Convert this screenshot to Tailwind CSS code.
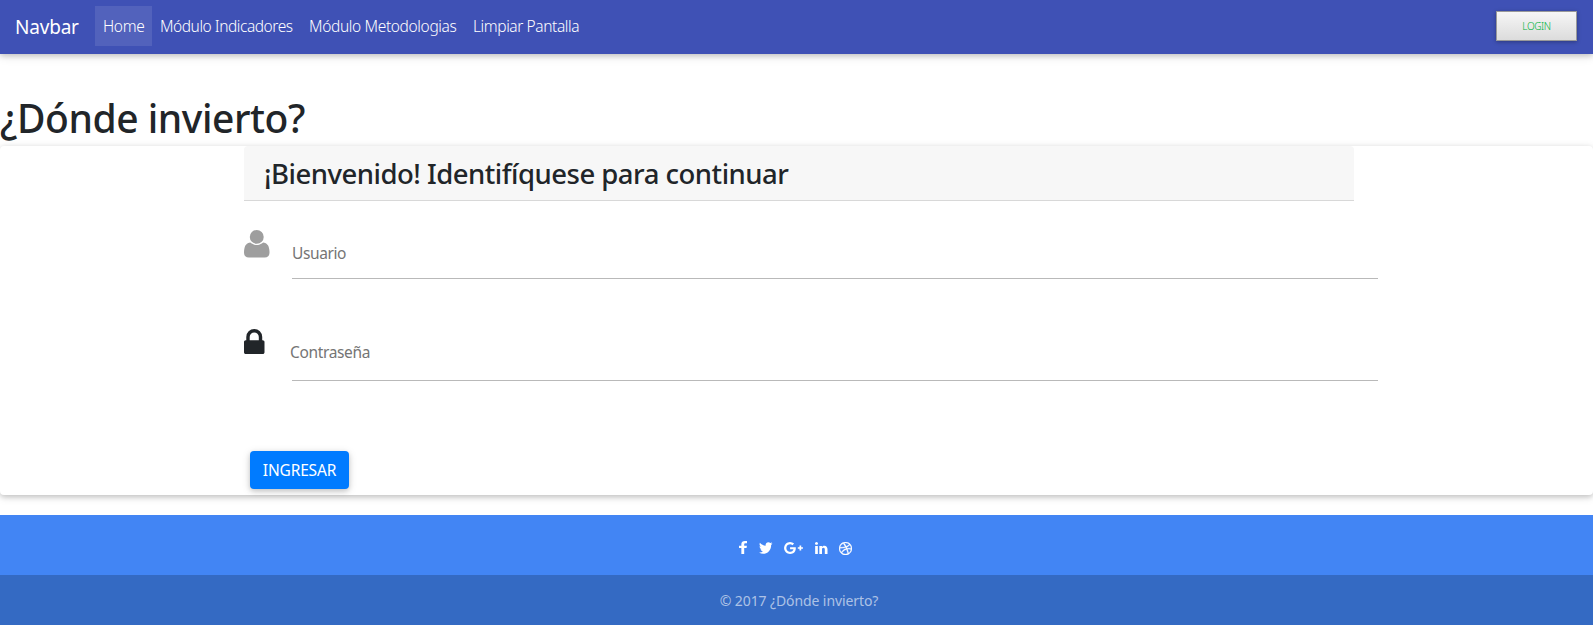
<!DOCTYPE html>
<html lang="es">
<head>
<meta charset="utf-8">
<title>¿Dónde invierto?</title>
<script src="https://cdn.jsdelivr.net/npm/@tailwindcss/browser@4"></script>
</head>
<body class="bg-white font-['Noto_Sans','Open_Sans',sans-serif] text-[#212529] overflow-hidden">
<nav class="flex h-[54px] items-start bg-[#3f51b5] pl-[15px] pr-4 text-white shadow-[0_2px_5px_0_rgba(0,0,0,0.16),0_2px_10px_0_rgba(0,0,0,0.12)]">
  <a class="mt-[12px] w-20 whitespace-nowrap text-[19px] leading-[30px] tracking-[-0.2px]">Navbar</a>
  <ul class="mt-[6px] flex whitespace-nowrap text-[15.5px] font-light leading-6 tracking-[-0.35px]">
    <li class="h-10 w-[57px] bg-white/10 px-2 py-2">Home</li>
    <li class="h-10 w-[149px] px-2 py-2 tracking-[-0.45px]">Módulo Indicadores</li>
    <li class="h-10 w-[164px] px-2 py-2">Módulo Metodologias</li>
    <li class="h-10 w-[121px] px-2 py-2 tracking-[-0.4px]">Limpiar Pantalla</li>
  </ul>
  <button class="ml-auto mt-[11px] h-[30px] w-[81px] border border-[#999] bg-linear-to-b from-[#f6f6f6] to-[#dcdcdc] text-[10px] font-light text-[#00b33c] shadow-[0_1px_4px_rgba(0,0,0,0.3)] tracking-[-0.4px]">LOGIN</button>
</nav>
<h1 class="mt-[40px] h-[52px] whitespace-nowrap text-[39px] font-medium leading-[48px] tracking-[-0.45px]">¿Dónde invierto?</h1>
<main class="h-[349px] rounded bg-white px-[244px] shadow-[0_2px_5px_0_rgba(0,0,0,0.16),0_2px_10px_0_rgba(0,0,0,0.12)]">
  <div class="h-[55px] w-[1110px] rounded-t border-b border-[#d8d8d8] bg-[#f7f7f7] pl-5">
    <h3 class="whitespace-nowrap pt-[11px] text-[27.5px] font-medium leading-[34px] tracking-[-0.5px]">¡Bienvenido! Identifíquese para continuar</h3>
  </div>
  <div class="flex pt-[29px]">
    <svg class="h-[27.5px] w-[25.5px] shrink-0" viewBox="0 256 1408 1536" preserveAspectRatio="none" fill="#9e9e9e"><path d="M1408 1533q0 120-73 189.5t-194 69.5h-874q-121 0-194-69.5t-73-189.5q0-53 3.5-103.5t14-109 26.5-108.5 43-97.5 62-81 85.5-53.5 111.5-20q9 0 42 21.5t74.5 48 108 48 133.5 21.5 133.5-21.5 108-48 74.5-48 42-21.5q61 0 111.5 20t85.5 53.5 62 81 43 97.5 26.5 108.5 14 109 3.5 103.5zm-320-893q0 159-112.5 271.5t-271.5 112.5-271.5-112.5-112.5-271.5 112.5-271.5 271.5-112.5 271.5 112.5 112.5 271.5z"/></svg>
    <div class="ml-[22.5px] h-[49px] w-[1086px] shrink-0 border-b border-[#b9b9b9] pt-[11px] text-[15.5px] leading-6 text-[#757575] tracking-[-0.4px]">Usuario</div>
  </div>
  <div class="flex pt-[50px]">
    <svg class="h-[25px] w-[20.5px] shrink-0" viewBox="320 128 1152 1408" preserveAspectRatio="none" fill="#212529"><path d="M640 768h512v-192q0-106-75-181t-181-75-181 75-75 181v192zm832 96v576q0 40-28 68t-68 28h-960q-40 0-68-28t-28-68v-576q0-40 28-68t68-28h32v-192q0-184 132-316t316-132 316 132 132 316v192h32q40 0 68 28t28 68z"/></svg>
    <div class="ml-[27.5px] h-[52px] w-[1086px] shrink-0 border-b border-[#b9b9b9] pt-[11px] text-[15.5px] leading-6 text-[#757575] tracking-[-0.35px]"><span class="-ml-[2px]">Contraseña</span></div>
  </div>
  <button class="ml-[6px] mt-[70px] h-[38px] w-[99px] rounded bg-[#007bff] pt-[2px] text-[15.5px] text-white shadow-[0_2px_5px_0_rgba(0,0,0,0.16),0_2px_10px_0_rgba(0,0,0,0.12)] tracking-[-0.15px]">INGRESAR</button>
</main>
<footer class="mt-5 bg-[#4285f4] text-white">
  <div class="flex h-[60px] items-start pl-[739px] pt-[25px]">
    <svg class="mt-[1px] h-[13px] w-2" viewBox="479 0 864 1664" preserveAspectRatio="none" fill="currentColor"><path d="M1343 12v264h-157q-86 0-116 36t-30 108v189h293l-39 296h-254v759h-306v-759h-255v-296h255v-218q0-186 104-288.5t277-102.5q147 0 228 12z"/></svg>
    <svg class="ml-3 mt-[2px] h-[12px] w-[13.5px]" viewBox="108 240 1576 1312" preserveAspectRatio="none" fill="currentColor"><path d="M1684 408q-67 98-162 167 1 14 1 42 0 130-38 259.5t-115.5 248.5-184.5 210.5-258 146-323 54.5q-271 0-496-145 35 4 78 4 225 0 401-138-105-2-188-64.5t-114-159.5q33 5 61 5 43 0 85-11-112-23-185.5-111.5t-73.5-205.5v-4q68 38 146 41-66-44-105-115t-39-154q0-88 44-163 121 149 294.5 238.5t371.5 99.5q-8-38-8-74 0-134 94.5-228.5t228.5-94.5q140 0 236 102 109-21 205-78-37 115-142 178 93-10 186-50z"/></svg>
    <svg class="ml-[11.5px] mt-[2px] h-[12px] w-[19px]" viewBox="0 163 2304 1466" fill="currentColor"><path d="M1437 913q0 208-87 370.5t-248 254-369 91.5q-149 0-285-58t-234-156-156-234-58-285 58-285 156-234 234-156 285-58q286 0 491 192l-199 191q-117-113-292-113-123 0-227.5 62t-165.5 168.5-61 232.5 61 232.5 165.5 168.5 227.5 62q83 0 152.5-23t114.5-57.5 78.5-78.5 49-83 21.5-74h-416v-252h692q12 63 12 122zm867-122v210h-209v209h-210v-209h-209v-210h209v-209h210v209h209z"/></svg>
    <svg class="ml-[12px] mt-[2px] h-[12px] w-[12.5px]" viewBox="128 148 1536 1468" preserveAspectRatio="none" fill="currentColor"><path d="M477 625v991h-330v-991h330zm21-306q1 73-50.5 122t-135.5 49h-2q-82 0-132-49t-50-122q0-74 51.5-122.5t134.5-48.5 133 48.5 51 122.5zm1166 729v568h-329v-530q0-105-40.5-164.5t-126.5-59.5q-63 0-105.5 34.5t-63.5 85.5q-11 30-11 81v553h-329q2-399 2-647t-1-296l-1-48h329v144h-2q20-32 41-56t56.5-52 87-43.5 114.5-15.5q171 0 275 113.5t104 332.5z"/></svg>
    <svg class="ml-[11.5px] mt-[1.5px] h-[13px] w-[13px]" viewBox="128 128 1536 1536" fill="currentColor" stroke="currentColor" stroke-width="40"><path d="M1152 1500q-42-241-140-498h-2l-2 1q-16 6-43 16.5t-101 49-137 82-131 114.5-103 148l-15-11q184 150 418 150 132 0 256-52zm-185-607q-21-49-53-111-311 93-673 93-1 7-1 21 0 124 44 236.5t124 201.5q50-89 123.5-166.5t142.5-124.5 130.5-81 99.5-48l37-13q4-1 13-3.5t13-4.5zm-107-212q-120-213-244-378-138 65-234 186t-128 272q302 0 606-80zm684 319q-210-60-409-29 87 239 128 469 111-75 185-189.5t96-250.5zm-805-741q-1 0-2 1 1-1 2-1zm590 145q-185-164-433-164-76 0-155 19 131 170 246 382 69-26 130-60.5t96.5-61.5 65.5-57 37.5-40.5zm223 485q-3-232-149-410l-1 1q-9 12-19 24.5t-43.5 44.5-71 60.5-100 65-131.5 64.5q25 53 44 95 2 5 6.5 17t7.5 17q36-5 74.5-7t73.5-2 69 1.5 64 4 56.5 5.5 48 6.5 36.5 6 25 4.5zm112 7q0 209-103 385.5t-279.5 279.5-385.5 103-385.5-103-279.5-279.5-103-385.5 103-385.5 279.5-279.5 385.5-103 385.5 103 279.5 279.5 103 385.5z"/></svg>
  </div>
  <div class="h-[50px] bg-black/20 pl-[5px] text-center text-[14px] leading-[52px] text-white/60 tracking-[-0.1px]">© 2017 ¿Dónde invierto?</div>
</footer>
</body>
</html>
